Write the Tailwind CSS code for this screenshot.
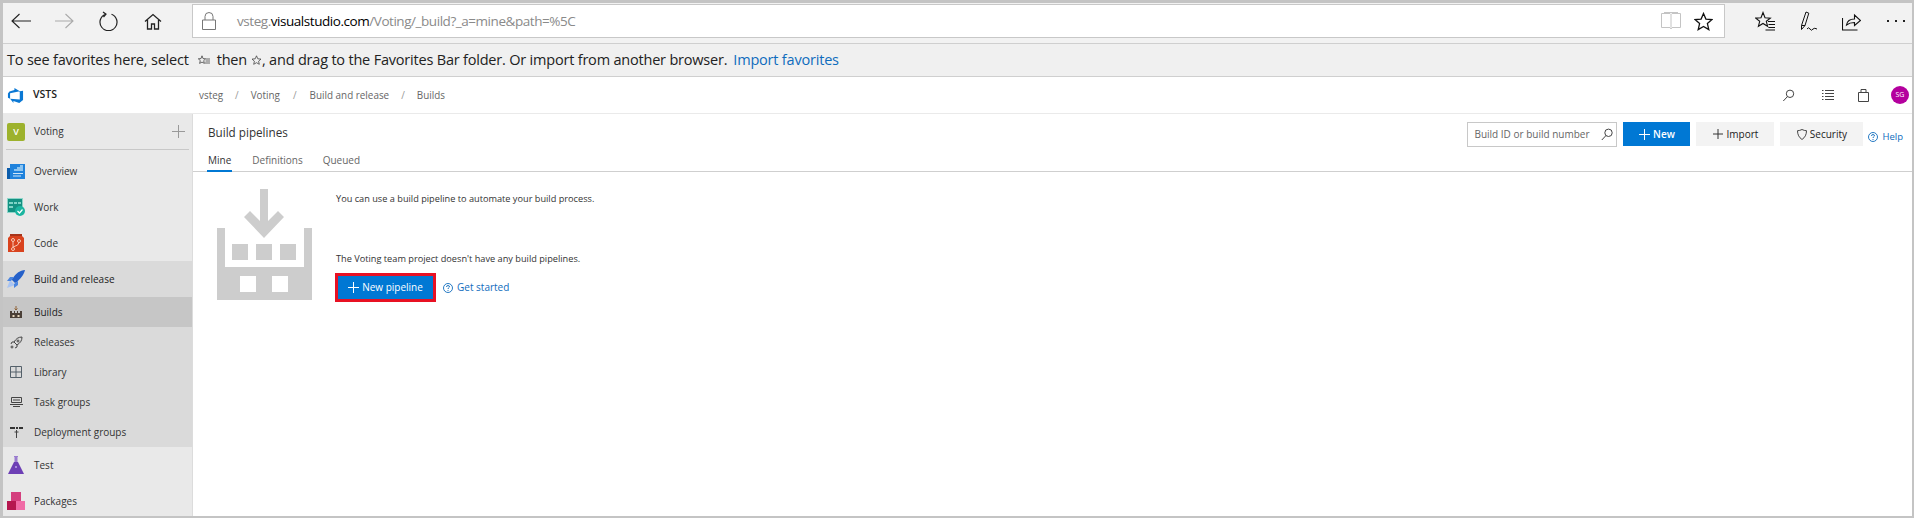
<!DOCTYPE html>
<html lang="en">
<head>
  <meta charset="UTF-8" />
  <meta name="viewport" content="width=device-width, initial-scale=1.0" />
  <title>Build pipelines</title>
  <script src="https://cdn.jsdelivr.net/npm/@tailwindcss/browser@4"></script>
</head>
<body class="bg-white overflow-hidden font-['Open_Sans',sans-serif]">
<div class="w-[1914px] h-[518px] flex flex-col border-t-[3px] border-l-[3px] border-r-[2px] border-b-[2px] border-[#c4c4c4] overflow-hidden">

  <!-- browser toolbar -->
  <div class="h-[39px] pt-[1px] shrink-0 bg-[#f2f2f2] flex items-start border-b border-[#cfcfcf] box-content">
    <div class="h-[34px] flex items-center shrink-0">
      <svg class="ml-[8px]" width="20" height="16" viewBox="0 0 20 16" fill="none" stroke="#222" stroke-width="1.100"><path d="M1 8h19M8.500 1 1 8l7.500 7"/></svg>
      <svg class="ml-[24px]" width="19" height="16" viewBox="0 0 19 16" fill="none" stroke="#aaa" stroke-width="1.100"><path d="M0 8h18M10.500 1 18 8l-7.500 7"/></svg>
      <svg class="ml-[25px]" width="19" height="20" viewBox="0 0 19 20" fill="none" stroke="#222" stroke-width="1.200"><path d="M6.500 3.200a8.500 8.500 0 1 0 6 0M4 1l3 2.200-2.500 2.800"/></svg>
      <svg class="ml-[26px]" width="18" height="17" viewBox="0 0 18 17" fill="none" stroke="#222" stroke-width="1.300"><path d="M1 8.500 9 1.500l8 7M3.500 7v9h4v-5h3v5h4V7"/></svg>
    </div>
    <div class="w-[1533px] h-[34px] ml-[30px] bg-white border border-[#c8c8c8] flex items-center justify-between text-[13.500px] tracking-[-0.45px] shrink-0">
      <div class="flex items-center">
        <svg class="ml-[9px]" width="14" height="18" viewBox="0 0 14 18" fill="none" stroke="#777" stroke-width="1"><path d="M.5 8h13v9.500H.5zM3 8V4.500a4 4 0 0 1 8 0V8"/></svg>
        <span class="ml-[21px] text-[#8a8a8a]">vsteg.<span class="text-black">visualstudio.com</span>/Voting/_build?_a=mine&amp;path=%5C</span>
      </div>
      <div class="flex items-center mr-[11px]">
        <svg width="20" height="18" viewBox="0 0 20 18" fill="none" stroke="#c4c4c4" stroke-width="1"><path d="M.5 1.500H9l1 1 1-1h8.500v14H11l-1 1.500-1-1.500H.5zM10 2.500v13M3 .5h14"/></svg>
        <svg class="ml-[13px]" width="19" height="19" viewBox="0 0 19 19" fill="none" stroke="#111" stroke-width="1.300"><path d="M9.500 1.500l2.400 5.600 6.100.5-4.600 4 1.400 6-5.300-3.200-5.300 3.200 1.400-6-4.600-4 6.100-.5z"/></svg>
      </div>
    </div>
    <div class="h-[34px] flex items-center">
      <svg class="ml-[30px]" width="20" height="20" viewBox="0 0 20 20" fill="none" stroke="#111" stroke-width="1.100"><path d="M8 1.500l2 5.300 5.300.3-4 3.200 1.300 5-4.600-2.800-4.600 2.800 1.300-5-4-3.200 5.300-.3zM13 10.500h7M13.500 13.500H20M13.500 16.500H20M10.500 19H20"/></svg>
      <svg class="ml-[25px]" width="17" height="20" viewBox="0 0 17 20" fill="none" stroke="#111" stroke-width="1"><path d="M1.500 14.500 6 1l2.800 1.200-3.800 12.300zM1.500 14.500v4M5 14.500l-3.500 4M7 18q1.500-2.500 3 0t3 0q1.500-1.500 4 0"/></svg>
      <svg class="ml-[25px]" width="19" height="19" viewBox="0 0 19 19" fill="none" stroke="#111" stroke-width="1.100"><path d="M.5 6v12h15M4.500 13q1-6 8-6V3l6 5.500-6 5V10.500q-5 0-8 2.500z"/></svg>
      <span class="ml-[26px] flex gap-[6px]"><i class="block w-[2px] h-[2px] bg-[#222]"></i><i class="block w-[2px] h-[2px] bg-[#222]"></i><i class="block w-[2px] h-[2px] bg-[#222]"></i></span>
    </div>
  </div>

  <!-- favorites bar -->
  <div class="h-[32px] shrink-0 bg-[#f0f0f0] flex items-center pl-[4px] text-[14.500px] tracking-[-0.2px] text-[#222] border-b border-[#cfcfcf] box-content">
    <span>To see favorites here, select</span>
    <svg class="ml-[9px]" width="12" height="11" viewBox="0 0 12 11" fill="none" stroke="#444" stroke-width=".8"><path d="M4 .8l1 2.800 2.700.2-2 1.800.7 2.800L4 7.100 1.600 8.400l.7-2.800-2-1.800 2.700-.2zM8 4h4M7.500 6H12M7 8h5"/></svg>
    <span class="ml-[7px]">then</span>
    <svg class="ml-[4px]" width="11" height="11" viewBox="0 0 11 11" fill="none" stroke="#444" stroke-width=".8"><path d="M5.500.8l1.300 3 3.200.3-2.400 2.100.7 3.100-2.800-1.600-2.800 1.600.7-3.100L1 4.100l3.200-.3z"/></svg>
    <span>, and drag to the Favorites Bar folder. Or import from another browser.</span>
    <span class="ml-[6px] text-[#0f6cbd]">Import favorites</span>
  </div>

  <!-- vsts header -->
  <div class="h-[36px] shrink-0 bg-white flex items-center border-b border-[#eaeaea] box-content text-[9.900px]">
    <div class="w-[196px] flex items-center shrink-0">
      <svg class="ml-[4px]" width="17" height="17" viewBox="0 0 18 18"><path fill="#0a78d4" d="M17 4v9.740l-4 3.280-6.200-2.260V17l-3.510-4.590 10.230.8V4.440zm-3.410.49L7.860 1v2.290L2.580 4.840 1 6.870v4.610l2.260 1V6.570z"/></svg>
      <span class="ml-[9px] text-[10.500px] font-semibold text-[#222]">VSTS</span>
    </div>
    <div class="flex items-center text-[#666]">
      <span>vsteg</span><span class="mx-[12px] text-[#999]">/</span><span>Voting</span><span class="mx-[13px] text-[#999]">/</span><span>Build and release</span><span class="mx-[12px] text-[#999]">/</span><span>Builds</span>
    </div>
    <div class="ml-auto flex items-center mr-[3px]">
      <svg width="13" height="13" viewBox="0 0 12 13" fill="none" stroke="#444" stroke-width="1"><circle cx="7.500" cy="4.800" r="3.700"/><path d="M5 7.500.8 12"/></svg>
      <svg class="ml-[27px]" width="12" height="10" viewBox="0 0 12 10" fill="none" stroke="#444" stroke-width="1"><path d="M3 .5h9M3 3.500h9M3 6.500h9M3 9.500h9M0 .5h1.500M0 3.500h1.500M0 6.500h1.500M0 9.500h1.500"/></svg>
      <svg class="ml-[24px]" width="11" height="13" viewBox="0 0 11 13" fill="none" stroke="#444" stroke-width="1"><path d="M.5 3.500h10v9H.5zM3 3.500v-3h5v3"/></svg>
      <span class="ml-[22px] w-[18px] h-[18px] rounded-full bg-[#b4009e] text-white text-[7px] flex items-center justify-center">SG</span>
    </div>
  </div>

  <div class="flex-1 flex min-h-0">
    <!-- sidebar -->
    <div class="w-[190px] shrink-0 bg-[#e9e9e9] border-r border-[#dcdcdc] flex flex-col text-[10px] text-[#333] overflow-hidden">
      <div class="h-[36px] shrink-0 mx-[3px] mb-[3px] flex items-center border-b border-[#c8c8c8]">
        <span class="w-[18px] h-[18px] ml-[1px] rounded-[2px] bg-[#9db22d] text-white text-[9px] font-semibold flex items-center justify-center">V</span>
        <span class="ml-[9px]">Voting</span>
        <svg class="ml-auto mr-[4px]" width="13" height="13" viewBox="0 0 13 13" stroke="#999" stroke-width="1"><path d="M0 6.500h13M6.500 0v13"/></svg>
      </div>
      <div class="h-[36px] shrink-0 flex items-center">
        <svg class="ml-[4px]" width="18" height="16" viewBox="0 0 18 16"><path fill="#0b5cab" d="M0 5h4v11H0z"/><path fill="#1f82dc" d="M3 1h15v15H3z"/><path fill="#8cc4f0" d="M7 6h3V4h3V2h3v6H7z"/><path fill="#cfe6f8" d="M6 10h10v1H6zM6 12.500h8v1H6z"/></svg>
        <span class="ml-[9px]">Overview</span>
      </div>
      <div class="h-[36px] shrink-0 flex items-center">
        <svg class="ml-[4px]" width="18" height="18" viewBox="0 0 18 18"><path fill="#8fd6ca" d="M0 0h16v15H0z"/><path fill="#149182" d="M1 1h14v13H1z"/><path fill="#7fd3c6" d="M2 4h4v2H2zM7 4h3v2H7zM11 4h3v2h-3zM2 8h4v2H2z"/><circle cx="13" cy="13" r="5" fill="#1bb5a0"/><path d="M10.500 13l2 2 3-3.500" fill="none" stroke="#fff" stroke-width="1.200"/></svg>
        <span class="ml-[9px]">Work</span>
      </div>
      <div class="h-[36px] shrink-0 flex items-center">
        <svg class="ml-[5px]" width="16" height="18" viewBox="0 0 16 18"><path fill="#a8341a" d="M2 0h12v3H2z"/><path fill="#d9431e" d="M2 2h12l2 2v14H0V4z"/><g fill="none" stroke="#f7c7b5" stroke-width="1"><circle cx="5" cy="6" r="1.500"/><circle cx="5" cy="15" r="1.500"/><circle cx="11" cy="7" r="1.500"/><path d="M5 7.500v6M11 8.500q0 3-6 4.500"/></g></svg>
        <span class="ml-[10px]">Code</span>
      </div>
      <div class="bg-[#dadada] flex flex-col shrink-0">
        <div class="h-[36px] flex items-center">
          <svg class="ml-[4px]" width="18" height="18" viewBox="0 0 18 18"><path fill="#2560c9" d="M18 0c-5 .5-9 3-12 8l-2 1 4 4 2-1c3-3 7-7 8-12z"/><path fill="#a9c4f2" d="M0 18l3-8 5 5z"/><path fill="#4a85e0" d="M3 7h4L4 11H0zM11 11v4l-4 3v-4z"/></svg>
          <span class="ml-[9px] text-[#222]">Build and release</span>
        </div>
        <div class="h-[30px] bg-[#c6c6c6] flex items-center text-[#222]">
          <svg class="ml-[7px]" width="12" height="12" viewBox="0 0 12 12"><path fill="#4b4038" d="M0 5h2v2h2V5h1v2h2V5h1v2h2V5h2v7H0z"/><path d="M6 0v4M4.500 2.500 6 4l1.500-1.500" fill="none" stroke="#8a5a2a" stroke-width=".9"/><path fill="#e9d9c0" d="M2.500 9h2v2h-2zM7.500 9h2v2h-2z"/></svg>
          <span class="ml-[12px]">Builds</span>
        </div>
        <div class="h-[30px] flex items-center">
          <svg class="ml-[7px]" width="13" height="13" viewBox="0 0 13 13" fill="none" stroke="#444" stroke-width="1"><path d="M12 1c-4 0-6 2-8 5l3 3c3-2 5-4 5-8zM4 6H2L1 8M7 9v2l-2 1"/><circle cx="8" cy="5" r="1"/><circle cx="2" cy="11" r="1"/></svg>
          <span class="ml-[11px]">Releases</span>
        </div>
        <div class="h-[30px] flex items-center">
          <svg class="ml-[7px]" width="12" height="12" viewBox="0 0 12 12" fill="none" stroke="#54606a" stroke-width="1"><path d="M.5 .5h11v11H.5zM.5 6h11M6 .5v11"/></svg>
          <span class="ml-[12px]">Library</span>
        </div>
        <div class="h-[30px] flex items-center">
          <svg class="ml-[7px]" width="13" height="10" viewBox="0 0 13 10" fill="none" stroke="#444" stroke-width="1"><path d="M1.500.5h10v5h-10zM3 3h7M0 7.500h13M3 9.500h7"/></svg>
          <span class="ml-[11px]">Task groups</span>
        </div>
        <div class="h-[30px] flex items-center">
          <svg class="ml-[7px]" width="13" height="11" viewBox="0 0 13 11"><path fill="#333" d="M0 0h5v2H0zM6 0h2v2H6zM9 0h4v2H9z"/><path d="M6.500 3v8M4.500 5h4" stroke="#444" fill="none"/></svg>
          <span class="ml-[11px]">Deployment groups</span>
        </div>
      </div>
      <div class="h-[36px] shrink-0 flex items-center">
        <svg class="ml-[5px]" width="16" height="18" viewBox="0 0 16 18"><path fill="#9a7ccf" d="M6 0h4v1H9.500v5H6.500V1H6z"/><path fill="#6d3fb5" d="M6 6h4l6 12H0z"/><path fill="#a98bdc" d="M7 10h2v2H7z"/></svg>
        <span class="ml-[10px]">Test</span>
      </div>
      <div class="h-[36px] shrink-0 flex items-center">
        <svg class="ml-[4px]" width="18" height="18" viewBox="0 0 18 18"><path fill="#d43f7e" d="M4 0h10v9H4z"/><path fill="#b5174f" d="M0 9h9v9H0z"/><path fill="#f06ba6" d="M9 9h9v9H9z"/></svg>
        <span class="ml-[9px]">Packages</span>
      </div>
    </div>

    <!-- main -->
    <div class="flex-1 min-w-0 flex flex-col text-[#333]">
      <div class="h-[57px] shrink-0 border-b border-[#cfcfcf] flex box-content">
        <div class="ml-[15px] flex flex-col">
          <div class="mt-[9px] text-[11.700px] leading-[18px] text-[#333]">Build pipelines</div>
          <div class="mt-[12px] ml-[-1px] flex text-[10px] leading-[14px] text-[#666] gap-[20px]">
            <span class="h-[19px] px-[1px] border-b-2 border-[#0078d4] text-[#333]">Mine</span>
            <span>Definitions</span>
            <span>Queued</span>
          </div>
        </div>
        <div class="ml-auto mr-[9px] flex items-start pt-[8px] text-[10px]">
          <div class="w-[150px] h-[25px] border border-[#c8c8c8] flex items-center justify-between pl-[6px] pr-[3px] text-[#666] whitespace-nowrap">
            <span>Build ID or build number</span>
            <svg width="12" height="13" viewBox="0 0 12 13" fill="none" stroke="#444" stroke-width="1"><circle cx="7.500" cy="4.800" r="3.700"/><path d="M5 7.500.8 12"/></svg>
          </div>
          <div class="ml-[6px] w-[67px] h-[24px] bg-[#0078d4] text-white font-semibold flex items-center justify-center gap-[3px]">
            <svg width="11" height="11" viewBox="0 0 11 11" stroke="#fff" stroke-width="1"><path d="M0 5.500h11M5.500 0v11"/></svg>New
          </div>
          <div class="ml-[6px] w-[78px] h-[24px] bg-[#f3f3f3] text-[#222] flex items-center justify-center gap-[4px]">
            <svg width="10" height="10" viewBox="0 0 10 10" stroke="#333" stroke-width="1"><path d="M0 5h10M5 0v10"/></svg>Import
          </div>
          <div class="ml-[6px] w-[83px] h-[24px] bg-[#f3f3f3] text-[#222] flex items-center justify-center gap-[3px]">
            <svg width="10" height="11" viewBox="0 0 10 11" fill="none" stroke="#333" stroke-width=".9"><path d="M5 .5q2.300 1.200 4.500 1.200 0 5.800-4.500 8.800-4.500-3-4.500-8.800Q2.700 1.700 5 .5z"/></svg>Security
          </div>
          <div class="ml-[5px] mt-[8px] flex items-center gap-[4px] text-[9.500px] text-[#0f6cbd]">
            <svg width="10" height="10" viewBox="0 0 10 10" fill="none" stroke="#0f6cbd" stroke-width=".9"><circle cx="5" cy="5" r="4.500"/><path d="M3.500 4q0-1.500 1.500-1.500T6.500 4Q5 5 5 6M5 7v1"/></svg>Help
          </div>
        </div>
      </div>
      <div class="flex ml-[24px]">
        <svg class="mt-[17px] shrink-0" width="95" height="111" viewBox="0 0 95 111" fill="#cdcdcd"><path d="M43 0h8v32l10-10 6 6-20 21-20-21 6-6 10 10z"/><path fill-rule="evenodd" d="M0 39h8v39h79V39h8v72H0zM23 87v16h16V87zM55 87v16h16V87z"/><path d="M15 55h16v16H15zM39 55h16v16H39zM63 55h16v16H63z"/></svg>
        <div class="ml-[24px] flex flex-col text-[9.200px] text-[#333]">
          <div class="mt-[20px] leading-[14px]">You can use a build pipeline to automate your build process.</div>
          <div class="mt-[46px] leading-[14px]">The Voting team project doesn't have any build pipelines.</div>
          <div class="mt-[7px] ml-[-1px] flex items-center">
            <div class="w-[101px] h-[29px] border-[3px] border-[#e81123] bg-[#0078d4] text-white text-[10px] flex items-center justify-center gap-[3px]">
              <svg width="11" height="11" viewBox="0 0 11 11" stroke="#fff" stroke-width="1"><path d="M0 5.500h11M5.500 0v11"/></svg>New pipeline
            </div>
            <svg class="ml-[7px]" width="10" height="10" viewBox="0 0 10 10" fill="none" stroke="#0f6cbd" stroke-width=".9"><circle cx="5" cy="5" r="4.500"/><path d="M3.500 4q0-1.500 1.500-1.500T6.500 4Q5 5 5 6M5 7v1"/></svg>
            <span class="ml-[4px] text-[10px] text-[#0f6cbd]">Get started</span>
          </div>
        </div>
      </div>
    </div>
  </div>
</div>
</body>
</html>
